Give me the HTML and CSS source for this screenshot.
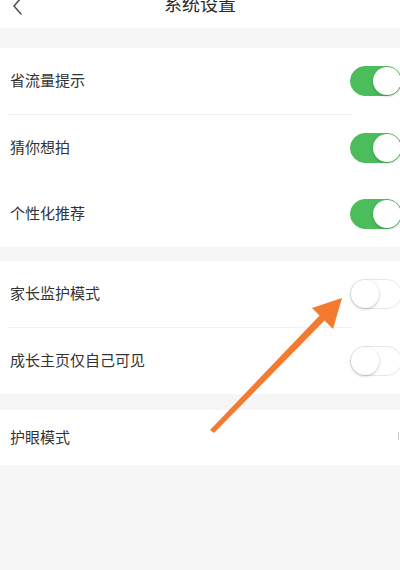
FILE: index.html
```
<!DOCTYPE html>
<html lang="zh">
<head>
<meta charset="utf-8">
<link rel="stylesheet" href="styles.css">
</head>
<body>
<div class="page">
  <div class="header">
    <svg class="back" width="14" height="16" viewBox="0 0 14 16"><polyline points="10,-2 3,6 10,14" fill="none" stroke="#555" stroke-width="1.6" stroke-linecap="round" stroke-linejoin="round"/></svg>
    <div class="title">系统设置</div>
  </div>
  <div class="gap g1"></div>
  <div class="group">
    <div class="row"><span class="label">省流量提示</span><span class="toggle on"><span class="knob"></span></span></div>
    <div class="divider"></div>
    <div class="row"><span class="label">猜你想拍</span><span class="toggle on"><span class="knob"></span></span></div>
    <div class="row"><span class="label">个性化推荐</span><span class="toggle on"><span class="knob"></span></span></div>
  </div>
  <div class="gap g2"></div>
  <div class="group">
    <div class="row"><span class="label">家长监护模式</span><span class="toggle"><span class="knob"></span></span></div>
    <div class="divider"></div>
    <div class="row"><span class="label">成长主页仅自己可见</span><span class="toggle"><span class="knob"></span></span></div>
  </div>
  <div class="gap g3"></div>
  <div class="group">
    <div class="row short"><span class="label">护眼模式</span><span class="chev"></span></div>
  </div>
  <svg class="arrow" width="400" height="570" viewBox="0 0 400 570">
    <polygon points="210,430 214,433 327,318 322,313" fill="#f37a2e"/>
    <polygon points="342,298 312,308 333,329" fill="#f37a2e"/>
  </svg>
</div>
</body>
</html>
```
FILE: styles.css
```
html, body {
  margin: 0;
  padding: 0;
}
body {
  background: #f6f6f6;
  font-family: "Noto Sans CJK SC", "Noto Sans", sans-serif;
  color: #333;
  overflow: hidden;
}
.page {
  position: relative;
  width: 400px;
  height: 570px;
  overflow: hidden;
  background: #f6f6f6;
}
.header {
  height: 28px;
  background: #fff;
  display: flex;
  justify-content: center;
  position: relative;
}
.back {
  position: absolute;
  left: 11px;
  top: 0;
}
.title {
  font-size: 18px;
  line-height: 18px;
  margin-top: -6px;
  color: #2a2a2a;
}
.gap.g1 { height: 20px; }
.gap.g2 { height: 14px; }
.gap.g3 { height: 16px; }
.group {
  background: #fff;
}
.row {
  height: 66px;
  box-sizing: border-box;
  padding-bottom: 3px;
  display: flex;
  align-items: center;
  justify-content: space-between;
  padding-left: 10px;
}
.row.short {
  height: 55px;
}
.label {
  font-size: 15px;
  color: #333;
}
.divider {
  height: 1px;
  background: #f2f2f2;
  margin: 0 48px 0 8px;
}
.toggle {
  width: 52px;
  height: 30px;
  border-radius: 16px;
  box-sizing: border-box;
  border: 1px solid #e6e6e6;
  background: #fff;
  margin-right: -2px;
  margin-top: 3px;
  position: relative;
  flex: none;
}
.toggle.on {
  background: #4cbd5b;
  border-color: #4cbd5b;
}
.knob {
  position: absolute;
  top: 0;
  left: 0;
  width: 28px;
  height: 28px;
  border-radius: 50%;
  background: #fff;
  box-shadow: 0 1px 3px rgba(0,0,0,0.25);
}
.toggle.on .knob {
  left: 22px;
}
.chev {
  width: 4px;
  height: 8px;
  border-left: 1px solid #ccc;
  margin-right: -3px;
}
.arrow {
  position: absolute;
  left: 0;
  top: 0;
  pointer-events: none;
}
```
